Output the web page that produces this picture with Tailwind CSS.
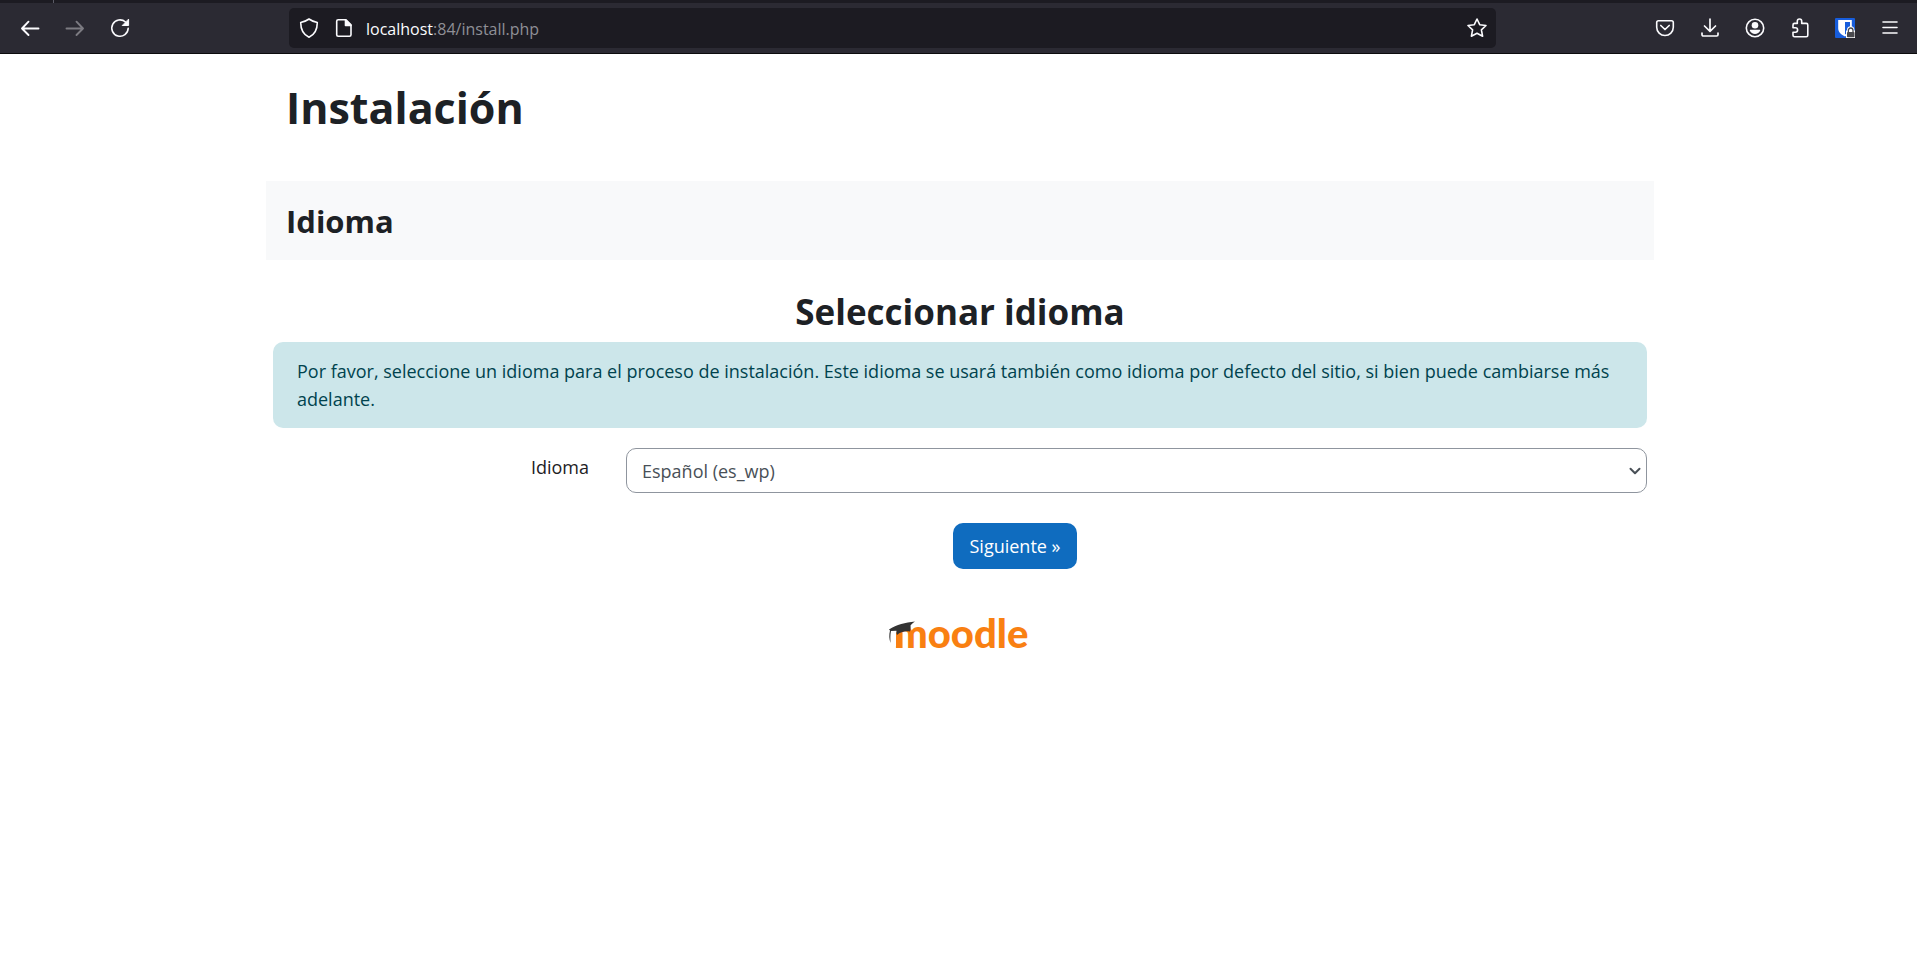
<!DOCTYPE html>
<html lang="es">
<head>
<meta charset="utf-8">
<meta name="viewport" content="width=device-width, initial-scale=1">
<title>Instalación</title>
<script src="https://cdn.jsdelivr.net/npm/@tailwindcss/browser@4"></script>
</head>
<body class="min-h-screen bg-white font-['Open_Sans','Noto_Sans',sans-serif] text-[18px] leading-7 text-[#1d2125]">

<!-- Browser toolbar -->
<header class="border-b border-[#0c0c0d] bg-[#2b2a33] text-[#fbfbfe]">
  <div class="flex h-[3px] bg-[#1c1b22]"><span class="ml-[53px] w-px bg-[#5b5b66]"></span></div>
  <div class="flex h-[50px] items-center pl-[7px] pr-[5px]">
    <nav class="flex" aria-label="Navegación">
      <button type="button" aria-label="Atrás" class="grid h-10 w-[45px] place-items-center">
        <svg class="size-5" viewBox="0 0 20 20" fill="none" stroke="currentColor" stroke-width="1.9" stroke-linecap="round" stroke-linejoin="round"><path d="M18.5 10.5H2M8.5 3.7L2 10.5l6.5 6.5"/></svg>
      </button>
      <button type="button" aria-label="Adelante" disabled class="grid h-10 w-[45px] place-items-center text-[#7c7b82]">
        <svg class="size-5" viewBox="0 0 20 20" fill="none" stroke="currentColor" stroke-width="1.9" stroke-linecap="round" stroke-linejoin="round"><path d="M1.5 10.5H18M11.5 3.7L18 10.5l-6.5 6.5"/></svg>
      </button>
      <button type="button" aria-label="Recargar" class="grid h-10 w-[45px] place-items-center">
        <svg class="size-5" viewBox="0 0 20 20" fill="none" stroke="currentColor" stroke-width="1.6" stroke-linecap="round"><path d="M18.2 10.3A8.2 8.2 0 1 1 15.5 4"/><path d="M18.6 1.5v6h-6z" fill="currentColor" stroke-width="1" stroke-linejoin="round"/></svg>
      </button>
    </nav>
    <div class="ml-[147px] flex h-10 grow items-center rounded-[5px] bg-[#1c1b22] pl-[10px] pr-[9px]">
      <svg class="size-5" viewBox="0 0 20 20" fill="none" stroke="currentColor" stroke-width="1.6" stroke-linejoin="round"><path d="M10 1c2.6 1.9 5.4 2.9 8.3 3.5 0 6.2-1.8 11.8-8.3 14.7C3.5 16.3 1.7 10.7 1.7 4.5 4.6 3.9 7.4 2.9 10 1z"/></svg>
      <svg class="ml-[15px] size-5" viewBox="0 0 20 20" fill="none" stroke="currentColor" stroke-width="1.6" stroke-linejoin="round"><path d="M4.2 1.8h7.8l5 5v10a1.5 1.5 0 0 1-1.5 1.5H4.2a1.5 1.5 0 0 1-1.5-1.5V3.300a1.5 1.5 0 0 1 1.5-1.5z"/><path d="M11.5 2v5.500H17z" fill="currentColor"/></svg>
      <p class="ml-3 grow pt-[2px] text-[16px] leading-6 text-[#8f8f96]"><span class="text-[#fbfbfe]">localhost</span>:84/install.php</p>
      <button type="button" aria-label="Añadir a marcadores">
        <svg class="size-5" viewBox="0 0 20 20" fill="none" stroke="currentColor" stroke-width="1.6" stroke-linejoin="round"><path d="M10 1l2.7 5.7 6.3.8-4.600 4.300 1.200 6.400L10 15.200l-5.600 3 1.200-6.400L1 7.500l6.300-.8z"/></svg>
      </button>
    </div>
    <div class="ml-[146px] flex">
      <button type="button" aria-label="Pocket" class="grid h-10 w-[45px] place-items-center">
        <svg class="size-5" viewBox="0 0 20 20" fill="none" stroke="currentColor" stroke-width="1.6" stroke-linecap="round" stroke-linejoin="round"><path d="M3.500 2.800h13a1.800 1.800 0 0 1 1.800 1.800v4.600a8.300 8.300 0 0 1-16.600 0V4.600a1.800 1.800 0 0 1 1.800-1.800z"/><path d="M5.800 7.500l4.200 4 4.200-4" stroke-width="1.7"/></svg>
      </button>
      <button type="button" aria-label="Descargas" class="grid h-10 w-[45px] place-items-center">
        <svg class="size-5" viewBox="0 0 20 20" fill="none" stroke="currentColor" stroke-width="1.7" stroke-linecap="round" stroke-linejoin="round"><path d="M10 1v12M4.500 8l5.500 5.300L15.500 8M2 15v1.700a1.300 1.300 0 0 0 1.300 1.300h13.400a1.300 1.300 0 0 0 1.300-1.300V15"/></svg>
      </button>
      <button type="button" aria-label="Cuenta" class="grid h-10 w-[45px] place-items-center">
        <svg class="size-5" viewBox="0 0 20 20" fill="currentColor"><circle cx="10" cy="10" r="8.7" fill="none" stroke="currentColor" stroke-width="1.6"/><circle cx="10" cy="7.3" r="3.3"/><path d="M5.600 11.800h8.800c.6 0 .9.500.7 1C14.300 14.700 12.300 16 10 16s-4.300-1.300-5.100-3.200c-.2-.5.1-1 .7-1z"/></svg>
      </button>
      <button type="button" aria-label="Extensiones" class="grid h-10 w-[45px] place-items-center">
        <svg class="size-5" viewBox="0 0 20 20" fill="none" stroke="currentColor" stroke-width="1.6" stroke-linejoin="round"><path d="M7.300 5.400V3.200a2.200 2.200 0 0 1 4.400 0v2.200h4.600a1.500 1.500 0 0 1 1.500 1.500v10.300a1.500 1.500 0 0 1-1.500 1.500H4.500A1.500 1.500 0 0 1 3 17.200v-3h2.400a2.200 2.200 0 0 0 0-4.400H3V6.900a1.500 1.500 0 0 1 1.500-1.500z"/></svg>
      </button>
      <button type="button" aria-label="Bitwarden" class="grid h-10 w-[45px] place-items-center">
        <svg class="size-5" viewBox="0 0 20 20"><rect width="20" height="20" rx="1" fill="#175ddc"/><path d="M3.200 2h13.600v8.500c0 3.800-3.300 6.300-6.800 8-3.500-1.700-6.800-4.200-6.800-8z" fill="#fff"/><path d="M10 4h5v6.500c0 2.500-2 4.400-5 6z" fill="#175ddc"/><path d="M11 12.500h1V12a3.700 3.700 0 0 1 7.400 0v.5h.6V20h-9z" fill="#fff"/><rect x="12" y="14" width="7.5" height="5.3" rx=".8" fill="#4a4a4f"/><path d="M13.400 14v-1.700a2.300 2.300 0 0 1 4.600 0V14" fill="none" stroke="#4a4a4f" stroke-width="1.3"/></svg>
      </button>
      <button type="button" aria-label="Menú" class="grid h-10 w-[45px] place-items-center">
        <svg class="size-5" viewBox="0 0 20 20" fill="none" stroke="currentColor" stroke-width="1.6" stroke-linecap="round"><path d="M3 4h14M3 9.500h14M3 15h14"/></svg>
      </button>
    </div>
  </div>
</header>

<main class="mx-auto max-w-[1391px] pl-[3px]">
  <h1 class="px-5 pt-[26px] text-[43px] font-bold leading-[56px]">Instalación</h1>

  <div class="mt-[45px] bg-[#f8f9fa] px-5 pb-[18px] pt-5">
    <h2 class="text-[31px] font-bold leading-[41px]">Idioma</h2>
  </div>

  <form class="px-[7px] pt-[30px]" onsubmit="return false">
    <h2 class="text-center text-[35px] font-bold leading-[44px]">Seleccionar idioma</h2>
    <p class="mt-2 rounded-[10px] bg-[#cce6ea] px-6 py-[15px] text-[#00434e]">Por favor, seleccione un idioma para el proceso de instalación. Este idioma se usará también como idioma por defecto del sitio, si bien puede cambiarse más adelante.</p>
    <div class="mt-5 flex items-start">
      <label for="lang" class="w-[23%] pt-[5px] text-right">Idioma</label>
      <div class="relative ml-[37px] grow">
        <select id="lang" class="block h-[45px] w-full appearance-none rounded-[10px] border border-[#8f959e] bg-white px-[15px] text-[#495057]">
          <option>Español (es_wp)</option>
        </select>
        <svg class="pointer-events-none absolute right-[6px] top-[17px] size-3" viewBox="0 0 12 12" fill="none" stroke="#495057" stroke-width="2" stroke-linecap="round" stroke-linejoin="round"><path d="M1.500 3.800L6 8.300l4.500-4.500"/></svg>
      </div>
    </div>
    <div class="mt-[30px] flex justify-center pl-[110px]">
      <button type="submit" class="h-[46px] rounded-[10px] bg-[#0f6cbf] px-4 text-white">Siguiente »</button>
    </div>
  </form>

  <footer class="mt-9 flex justify-center">
    <a href="https://moodle.org" aria-label="Moodle">
      <svg class="h-14 w-[144px]" viewBox="0 -8 144 56">
        <text x="6" y="35" font-family="Lato, sans-serif" font-weight="900" font-size="40" fill="#f98012">moodle</text>
        <path d="M4 14V33H8V20L20 14V12z" fill="#fff"/>
        <path d="M8 35V19.5h6.500V35z" fill="#f98012"/>
        <path d="M1 16.500C9 11.500 17 9.500 27 8.500c-2 1.200-3.500 2.500-4.500 4 .3 2 .2 4-.5 6-4.500-.8-9.500.2-13 3.500-.6-1.300-.8-2.800-.6-4.200l-5.400.2c-.8 4-.7 8-.4 12-1.500-4-1.700-8-.6-12.500z" fill="#333"/>
      </svg>
    </a>
  </footer>
</main>
</body>
</html>
